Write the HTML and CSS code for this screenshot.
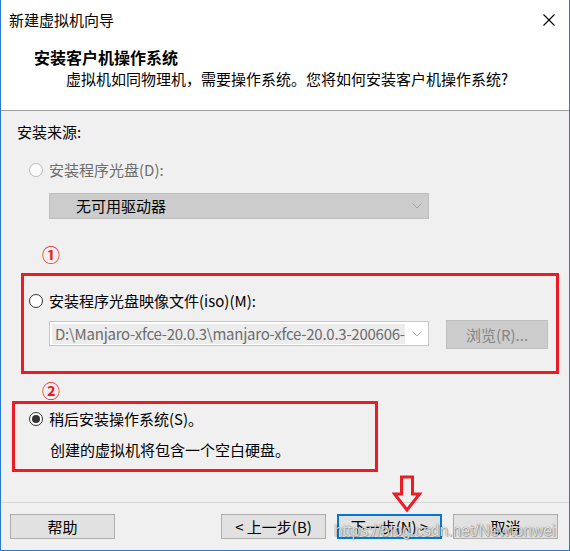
FILE: index.html
```html
<!DOCTYPE html>
<html lang="zh-CN">
<head>
<meta charset="utf-8">
<title>新建虚拟机向导</title>
<link rel="stylesheet" href="styles.css">
</head>
<body>
<div class="window">
  <div class="header">
    <div class="titlebar">
      <span class="title">新建虚拟机向导</span>
      <svg class="close" width="12" height="12" viewBox="0 0 12 12"><path d="M0.5 0.5 L11.5 11.5 M11.5 0.5 L0.5 11.5" stroke="#000" stroke-width="1.1" fill="none"/></svg>
    </div>
    <div class="heading">安装客户机操作系统</div>
    <div class="subtitle">虚拟机如同物理机，需要操作系统。您将如何安装客户机操作系统?</div>
  </div>

  <div class="content">
    <div class="section-label">安装来源:</div>

    <div class="radio-row disabled r1"><span class="radio"></span><span>安装程序光盘(D):</span></div>
    <div class="select">
      <span>无可用驱动器</span>
      <svg class="chev" width="10" height="6" viewBox="0 0 10 6"><polyline points="0.5,0.5 5,5 9.5,0.5" stroke="#a6a6a6" stroke-width="1" fill="none"/></svg>
    </div>

    <div class="radio-row r2"><span class="radio"></span><span>安装程序光盘映像文件(iso)(M):</span></div>
    <div class="iso-row">
      <div class="combo">
        <span class="combo-text">D:\Manjaro-xfce-20.0.3\manjaro-xfce-20.0.3-200606-minimal.iso</span>
        <svg class="chev" width="10" height="6" viewBox="0 0 10 6"><polyline points="0.5,0.5 5,5 9.5,0.5" stroke="#b4b4b4" stroke-width="1" fill="none"/></svg>
      </div>
      <div class="browse">浏览(R)...</div>
    </div>

    <div class="radio-row r3"><span class="radio checked"></span><span>稍后安装操作系统(S)。</span></div>
    <div class="note">创建的虚拟机将包含一个空白硬盘。</div>
  </div>

  <div class="footer">
    <div class="btn">帮助</div>
    <div class="spacer"></div>
    <div class="btn">&lt; 上一步(B)</div>
    <div class="btn primary">下一步(N) &gt;</div>
    <div class="btn">取消</div>
  </div>

  <div class="anno box1"></div>
  <div class="anno box2"></div>
  <span class="mark mark1">①</span>
  <span class="mark mark2">②</span>
  <svg class="arrow" width="31" height="40" viewBox="0 0 31 40"><polygon points="9.5,3 20.5,3 20.5,20 27.5,20 15,36 2.5,20 9.5,20" fill="none" stroke="#ec1c24" stroke-width="3" stroke-linejoin="miter"/></svg>
  <span class="watermark">https://blog.csdn.net/Newtonwei</span>
</div>
</body>
</html>
```

FILE: styles.css
```css
* { box-sizing: border-box; }
html, body { margin: 0; padding: 0; }
body {
  font-family: "Noto Sans CJK SC", sans-serif;
  font-size: 15px;
  color: #000;
  background: #f0f0f0;
}
.window {
  position: relative;
  width: 570px;
  height: 551px;
  border: 1px solid #2b78d0;
  border-top: 0;
  background: #f0f0f0;
  display: flex;
  flex-direction: column;
  overflow: hidden;
}
.header {
  flex: none;
  height: 111px;
  background: #fff;
  border-bottom: 1px solid #a0a0a0;
}
.titlebar {
  height: 39px;
  display: flex;
  align-items: center;
  justify-content: space-between;
  padding: 0 14px 0 8px;
}
.title { font-size: 15px; line-height: 39px; }
.close { display: block; }
.heading {
  margin-top: 7px;
  padding-left: 33px;
  font-size: 16px;
  font-weight: bold;
  line-height: 22px;
}
.subtitle {
  padding-left: 65px;
  line-height: 22px;
}
.content {
  flex: 1;
  padding: 11px 0 0 16px;
}
.section-label { height: 20px; line-height: 20px; }
.radio-row {
  display: flex;
  align-items: center;
  height: 20px;
  line-height: 20px;
  padding-left: 12px;
  gap: 6px;
}
.radio {
  flex: none;
  position: relative;
  width: 14px;
  height: 14px;
  border-radius: 50%;
  border: 1px solid #333;
  background: #fff;
}
.radio.checked::after {
  content: "";
  position: absolute;
  left: 2px;
  top: 2px;
  width: 8px;
  height: 8px;
  border-radius: 50%;
  background: #333;
}
.disabled { color: #6d6d6d; }
.disabled .radio { border-color: #bcbcbc; background: #fcfcfc; }
.r1 { margin-top: 18px; }
.r2 { margin-top: 72px; }
.r3 { margin-top: 60px; }
.select {
  margin: 13px 0 0 32px;
  width: 380px;
  height: 26px;
  background: #cccccc;
  border: 1px solid #bfbfbf;
  display: flex;
  align-items: center;
  justify-content: space-between;
  padding: 0 6px 0 26px;
  line-height: 20px;
}
.chev { display: block; }
.iso-row {
  margin: 9px 0 0 32px;
  display: flex;
  align-items: flex-start;
  gap: 17px;
}
.combo {
  margin-top: 1px;
  width: 380px;
  height: 25px;
  background: #fff;
  border: 1px solid #c6c6c6;
  display: flex;
  align-items: center;
  padding: 0 6px 0 2px;
  gap: 7px;
}
.combo-text {
  flex: 1;
  min-width: 0;
  overflow: hidden;
  white-space: nowrap;
  background: #ececec;
  color: #6d6d6d;
  line-height: 20px;
  padding-left: 3px;
  letter-spacing: -0.25px;
}
.browse {
  width: 102px;
  height: 29px;
  background: #cccccc;
  border: 1px solid #bfbfbf;
  color: #858585;
  display: flex;
  align-items: center;
  justify-content: center;
}
.note {
  margin-top: 11px;
  padding-left: 33px;
  line-height: 20px;
}
.footer {
  flex: none;
  height: 48px;
  border-top: 1px solid #d6d6d6;
  display: flex;
  align-items: center;
  padding: 0 11px 0 9px;
  gap: 11px;
}
.spacer { flex: 1; }
.btn {
  width: 105px;
  height: 25px;
  background: #e1e1e1;
  border: 1px solid #adadad;
  display: flex;
  align-items: center;
  justify-content: center;
  line-height: 20px;
}
.btn.primary { border: 2px solid #0078d7; }
.anno {
  position: absolute;
  border: 3px solid #ec1c24;
}
.box1 { left: 20px; top: 273px; width: 538px; height: 101px; }
.box2 { left: 11px; top: 401px; width: 366px; height: 71px; }
.mark {
  position: absolute;
  width: 20px;
  text-align: center;
  font-size: 18px;
  font-weight: bold;
  line-height: 20px;
  color: #ec1c24;
}
.mark1 { left: 40px; top: 244px; }
.mark2 { left: 40px; top: 380px; }
.arrow { position: absolute; left: 391px; top: 474px; }
.watermark {
  position: absolute;
  left: 333px;
  top: 521px;
  font-family: "Liberation Sans", Arial, sans-serif;
  font-size: 15.7px;
  line-height: 20px;
  white-space: nowrap;
  color: rgba(255, 255, 255, 0.8);
  text-shadow: 0 0 1px rgba(0, 0, 0, 0.6), 1px 1px 1px rgba(0, 0, 0, 0.25);
}
```
